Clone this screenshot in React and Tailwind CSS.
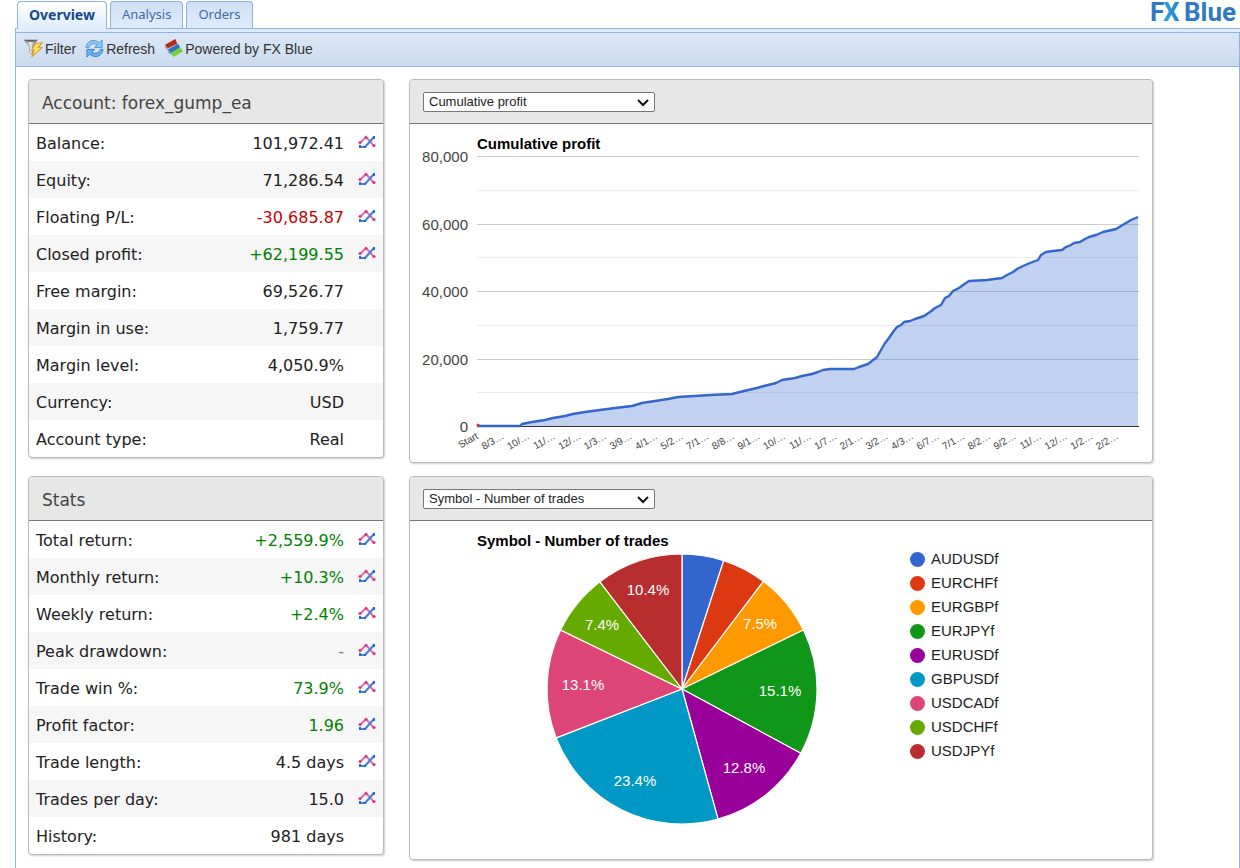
import { useState } from "react";

const accountRows = [
  { label: "Balance:", value: "101,972.41", chart: true },
  { label: "Equity:", value: "71,286.54", chart: true },
  { label: "Floating P/L:", value: "-30,685.87", color: "text-[#c80000]", chart: true },
  { label: "Closed profit:", value: "+62,199.55", color: "text-[#008000]", chart: true },
  { label: "Free margin:", value: "69,526.77" },
  { label: "Margin in use:", value: "1,759.77" },
  { label: "Margin level:", value: "4,050.9%" },
  { label: "Currency:", value: "USD" },
  { label: "Account type:", value: "Real" },
];

const statsRows = [
  { label: "Total return:", value: "+2,559.9%", color: "text-[#008000]", chart: true },
  { label: "Monthly return:", value: "+10.3%", color: "text-[#008000]", chart: true },
  { label: "Weekly return:", value: "+2.4%", color: "text-[#008000]", chart: true },
  { label: "Peak drawdown:", value: "-", color: "text-[#777777]", chart: true },
  { label: "Trade win %:", value: "73.9%", color: "text-[#008000]", chart: true },
  { label: "Profit factor:", value: "1.96", color: "text-[#008000]", chart: true },
  { label: "Trade length:", value: "4.5 days", chart: true },
  { label: "Trades per day:", value: "15.0", chart: true },
  { label: "History:", value: "981 days" },
];

const profitPoints = [
  [67, 272], [110, 272], [112, 270], [122, 268], [135, 266], [143, 264], [155, 262], [163, 260],
  [175, 258], [190, 256], [205, 254], [222, 252], [232, 249], [245, 247], [258, 245], [268, 243],
  [285, 242], [300, 241], [322, 240], [334, 237], [347, 234], [354, 232], [366, 229], [372, 226],
  [385, 224], [392, 222], [402, 220], [408, 218], [413, 216], [420, 215], [444, 215], [449, 213],
  [458, 210], [462, 207], [467, 203], [471, 196], [475, 189], [479, 184], [483, 178], [487, 173],
  [491, 171], [494, 168], [500, 167], [505, 165], [514, 162], [520, 158], [525, 154], [531, 151],
  [535, 144], [539, 142], [543, 137], [549, 134], [553, 131], [559, 127], [577, 126], [592, 124],
  [597, 121], [603, 118], [607, 115], [613, 112], [620, 109], [628, 106], [631, 101], [636, 98],
  [643, 97], [652, 96], [656, 93], [661, 91], [664, 89], [670, 88], [675, 85], [679, 83], [686, 81],
  [693, 78], [706, 75], [711, 72], [716, 69], [721, 66], [728, 63],
];

const dateLabels = [
  "Start", "8/3…", "10/…", "11/…", "12/…", "1/3…", "3/9…", "4/1…", "5/2…", "7/1…", "8/8…", "9/1…", "10/…",
  "11/…", "1/7…", "2/1…", "3/2…", "4/3…", "6/7…", "7/1…", "8/2…", "9/2…", "11/…", "12/…", "1/2…", "2/2…",
];

const symbols = [
  { name: "AUDUSDf", pct: 5.0, color: "#3366cc" },
  { name: "EURCHFf", pct: 5.3, color: "#dc3912" },
  { name: "EURGBPf", pct: 7.5, color: "#ff9900", at: [350, 82] },
  { name: "EURJPYf", pct: 15.1, color: "#109618", at: [370, 149] },
  { name: "EURUSDf", pct: 12.8, color: "#990099", at: [334, 226] },
  { name: "GBPUSDf", pct: 23.4, color: "#0099c6", at: [225, 239] },
  { name: "USDCADf", pct: 13.1, color: "#dd4477", at: [173, 143] },
  { name: "USDCHFf", pct: 7.4, color: "#66aa00", at: [192, 83] },
  { name: "USDJPYf", pct: 10.4, color: "#b82e2e", at: [238, 48] },
];

function FilterIcon() {
  return (
    <svg width="19" height="19" viewBox="0 0 20 20" aria-hidden="true">
      <defs>
        <linearGradient id="funnel">
          <stop offset="0" stopColor="#7b7b7b" />
          <stop offset="0.5" stopColor="#f0f0f0" />
          <stop offset="1" stopColor="#555555" />
        </linearGradient>
      </defs>
      <path d="M0 1h14L9 8v8l-3-2V8z" fill="url(#funnel)" stroke="#777" strokeWidth="0.6" />
      <path d="M1 1h12l-3 2H4z" fill="#5d5d5d" />
      <path d="M12 5l7-1-4 5h4L8 19l3-7H8z" fill="#ffdf70" stroke="#e0a030" strokeWidth="1.2" />
    </svg>
  );
}

function RefreshIcon() {
  return (
    <svg width="19" height="19" viewBox="0 0 20 20" aria-hidden="true">
      <path d="M1 9C2 2 9-1 15 4l3-3v8h-8l3-3C9 4 5 5 4 9z" fill="#8fcaf7" stroke="#4a98de" strokeWidth="1" />
      <path d="M19 11c-1 7-8 10-14 5l-3 3v-8h8l-3 3c4 2 8 1 9-3z" fill="#6ab2f3" stroke="#3484d2" strokeWidth="1" />
    </svg>
  );
}

function BlocksIcon() {
  return (
    <svg width="19" height="19" viewBox="0 0 20 20" aria-hidden="true">
      <path d="M1 6l11-6 2 5-10 5z" fill="#b22a22" />
      <path d="M1 6l3 4v2L1 9z" fill="#d88b85" />
      <path d="M4 11l11-6 2 4-10 6z" fill="#2c73b8" />
      <path d="M4 11l3 4v2l-3-3z" fill="#83afd5" />
      <path d="M7 15l10-6 3 4-10 6z" fill="#76cf3a" />
      <path d="M7 15l3 4v1l-3-3z" fill="#b5ea90" />
    </svg>
  );
}

function ChartIcon() {
  return (
    <svg width="18" height="14" viewBox="0 0 18 14" aria-hidden="true">
      <path d="M2 8L8 2l8 9" fill="none" stroke="#e070a8" strokeWidth="2" />
      <path d="M2 12h5l9-10" fill="none" stroke="#4680de" strokeWidth="2.2" />
      <g fill="#d23c85">
        <circle cx="2" cy="7.5" r="1.5" />
        <circle cx="8" cy="2.5" r="1.5" />
        <circle cx="16" cy="10.5" r="1.6" />
      </g>
      <g fill="#2c65cc">
        <rect x="1" y="10" width="2" height="3" />
        <rect x="6" y="11" width="2" height="2" />
        <rect x="15" y="1" width="2" height="3" />
      </g>
    </svg>
  );
}

function Panel({ header, children, className = "" }) {
  return (
    <section className={`flex flex-col overflow-hidden rounded-[4px] border border-[#bbbbbb] bg-white shadow-[1px_1px_2px_#cccccc] ${className}`}>
      <div className="flex h-11 shrink-0 items-center border-b border-[#777777] bg-[#e7e7e7] px-[13px]">{header}</div>
      {children}
    </section>
  );
}

function DataPanel({ title, rows }) {
  return (
    <Panel header={<h2 className="pt-0.5 text-[17px] leading-6 text-[#444444]">{title}</h2>}>
      <table className="w-full text-base text-[#222222]">
        <tbody>
          {rows.map((row) => (
            <tr key={row.label} className="h-[37px] even:bg-[#f6f6f6]">
              <th scope="row" className="pt-0.5 pl-[7px] text-left font-normal">{row.label}</th>
              <td className={`pt-0.5 text-right ${row.color || ""}`}>{row.value}</td>
              <td className="w-[39px] pb-0.5 pl-[14px]">
                {row.chart && (
                  <button type="button" aria-label={`Chart ${row.label}`} className="block cursor-pointer">
                    <ChartIcon />
                  </button>
                )}
              </td>
            </tr>
          ))}
        </tbody>
      </table>
    </Panel>
  );
}

function ChartSelect({ label, value, onChange, options }) {
  return (
    <div className="relative pt-px">
      <select
        aria-label={label}
        value={value}
        onChange={(e) => onChange(e.target.value)}
        className="block h-5 w-[232px] appearance-none rounded-[2px] border border-[#767676] bg-white pr-6 pl-[5px] font-['Liberation_Sans',sans-serif] text-[13px] leading-4 text-[#222222]"
      >
        {options.map((option) => (
          <option key={option}>{option}</option>
        ))}
      </select>
      <svg width="12" height="8" viewBox="0 0 12 8" className="pointer-events-none absolute top-2 right-[6px]" aria-hidden="true">
        <path d="M1 1l5 5 5-5" fill="none" stroke="#111111" strokeWidth="2" />
      </svg>
    </div>
  );
}

function ProfitChart() {
  const line = profitPoints.map((p) => p.join(",")).join(" L");

  return (
    <svg viewBox="0 0 742 308" className="h-auto w-full overflow-visible" fontSize="15" fill="#444444">
      {[0, 1, 2, 3, 4, 5, 6, 7].map((i) => (
        <rect key={i} x="67" y={Math.round(2 + i * 33.75)} width="662" height="1" fill={i % 2 ? "#ebebeb" : "#cccccc"} />
      ))}
      {["80,000", "60,000", "40,000", "20,000", "0"].map((text, i) => (
        <text key={text} x="58" y={8 + i * 67.5} textAnchor="end">{text}</text>
      ))}
      <path d={`M${line} L728,272 Z`} fill="#3366cc" fillOpacity="0.3" />
      <rect x="67" y="272" width="662" height="1" fill="#333333" />
      <path d={`M${line}`} fill="none" stroke="#3366cc" strokeWidth="2.4" strokeLinejoin="round" />
      <circle cx="68" cy="271" r="1.5" fill="#dc3912" />
      <g fontSize="10">
        {dateLabels.map((text, i) => (
          <text key={i} textAnchor="end" transform={`translate(${69 + i * 25.6} 284) rotate(-30)`}>{text}</text>
        ))}
      </g>
    </svg>
  );
}

function PieChart() {
  const cx = 272;
  const cy = 142;
  const r = 135;
  let angle = 0;

  const slices = symbols.map((s) => {
    const start = angle;
    angle += (s.pct / 100) * Math.PI * 2;
    const x1 = cx + r * Math.sin(start);
    const y1 = cy - r * Math.cos(start);
    const x2 = cx + r * Math.sin(angle);
    const y2 = cy - r * Math.cos(angle);
    return { ...s, d: `M${cx} ${cy}L${x1} ${y1}A${r} ${r} 0 0 1 ${x2} ${y2}Z` };
  });

  return (
    <svg viewBox="0 4 500 290" className="min-w-0 grow-[500] basis-0" fontSize="15">
      {slices.map((s) => (
        <path key={s.name} d={s.d} fill={s.color} stroke="#ffffff" strokeWidth="1.2" />
      ))}
      {slices.filter((s) => s.at).map((s) => (
        <text key={s.name} x={s.at[0]} y={s.at[1]} textAnchor="middle" fill="#ffffff">{s.pct}%</text>
      ))}
    </svg>
  );
}

export default function App() {
  const [tab, setTab] = useState("Overview");
  const [lineType, setLineType] = useState("Cumulative profit");
  const [pieType, setPieType] = useState("Symbol - Number of trades");

  return (
    <div className="flex min-h-screen flex-col bg-white pl-[15px] font-['DejaVu_Sans',sans-serif]">
      {/* Tabs and logo */}
      <header className="flex h-7 items-end justify-between pl-[2px] pr-1">
        <nav className="flex items-end gap-[3px] font-['Noto_Sans',sans-serif]">
          {["Overview", "Analysis", "Orders"].map((name) => (
            <button
              key={name}
              type="button"
              onClick={() => setTab(name)}
              className={
                tab === name
                  ? "relative -mb-px h-7 rounded-t-[4px] border border-b-0 border-[#8db2e3] bg-linear-to-b from-white to-[#deecfd] px-[11px] pb-0.5 text-sm font-bold text-[#15498b]"
                  : "h-[27px] rounded-t-[4px] border border-b-0 border-[#8db2e3] bg-linear-to-b from-[#cfe0f5] to-[#deecfd] px-[11px] text-[13px] text-[#416aa3]"
              }
            >
              {name}
            </button>
          ))}
        </nav>
        <a href="#fxblue" className="flex h-7 items-start gap-[6px] font-['Roboto',sans-serif] text-[25px] leading-6 font-bold text-[#2f79c2]">
          <svg width="86" height="26" viewBox="0 0 86 26" fontSize="26" fill="#2f79c2" role="img" aria-label="FX Blue">
            <defs>
              <linearGradient id="logoX">
                <stop offset="0" stopColor="#22a9e0" />
                <stop offset="1" stopColor="#2f79c2" />
              </linearGradient>
            </defs>
            <text x="0" y="21">F</text>
            <text x="13" y="21" fill="url(#logoX)">X</text>
            <text x="34" y="21">Blue</text>
          </svg>
        </a>
      </header>

      <div className="h-1 border-t border-l border-[#8db2e3] bg-[#deecfd]" />

      {/* Toolbar */}
      <div className="flex h-[35px] items-center gap-[9px] border border-[#8db2e3] bg-linear-to-b from-[#dbe7f6] to-[#cbdbef] px-2 pb-0.5 font-['Liberation_Sans',sans-serif] text-sm text-[#333333]">
        <button type="button" className="flex items-center gap-[2px]"><FilterIcon />Filter</button>
        <button type="button" className="flex items-center gap-[2px]"><RefreshIcon />Refresh</button>
        <button type="button" className="flex items-center gap-[2px]"><BlocksIcon />Powered by FX Blue</button>
      </div>

      <main className="flex grow items-start gap-[25px] border-x border-[#8db2e3] pt-3 pr-[86px] pb-2 pl-3">
        {/* Account data */}
        <div className="flex w-[356px] shrink-0 flex-col gap-[18px]">
          <DataPanel title="Account: forex_gump_ea" rows={accountRows} />
          <DataPanel title="Stats" rows={statsRows} />
        </div>

        {/* Charts */}
        <div className="flex min-w-0 flex-1 flex-col gap-[13px] font-['Liberation_Sans',sans-serif]">
          <Panel
            className="min-h-[384px]"
            header={
              <ChartSelect
                label="Line chart type"
                value={lineType}
                onChange={setLineType}
                options={["Cumulative profit", "Balance", "Equity"]}
              />
            }
          >
            <h3 className="pt-[10px] pl-[67px] text-[15px] leading-5 font-bold text-black">{lineType}</h3>
            <ProfitChart />
          </Panel>
          <Panel
            className="min-h-[384px]"
            header={
              <ChartSelect
                label="Pie chart type"
                value={pieType}
                onChange={setPieType}
                options={["Symbol - Number of trades", "Symbol - Profit"]}
              />
            }
          >
            <h3 className="pt-[10px] pl-[67px] text-[15px] leading-5 font-bold text-black">{pieType}</h3>
            <div className="flex items-start">
              <PieChart />
              <ul className="-mt-1 min-w-0 grow-[242] basis-0 text-[15px] leading-6 text-[#222222]">
                {symbols.map((s) => (
                  <li key={s.name} className="flex items-center gap-[6px]">
                    <span className="size-[15px] rounded-full" style={{ backgroundColor: s.color }} />
                    {s.name}
                  </li>
                ))}
              </ul>
            </div>
          </Panel>
        </div>
      </main>
    </div>
  );
}
